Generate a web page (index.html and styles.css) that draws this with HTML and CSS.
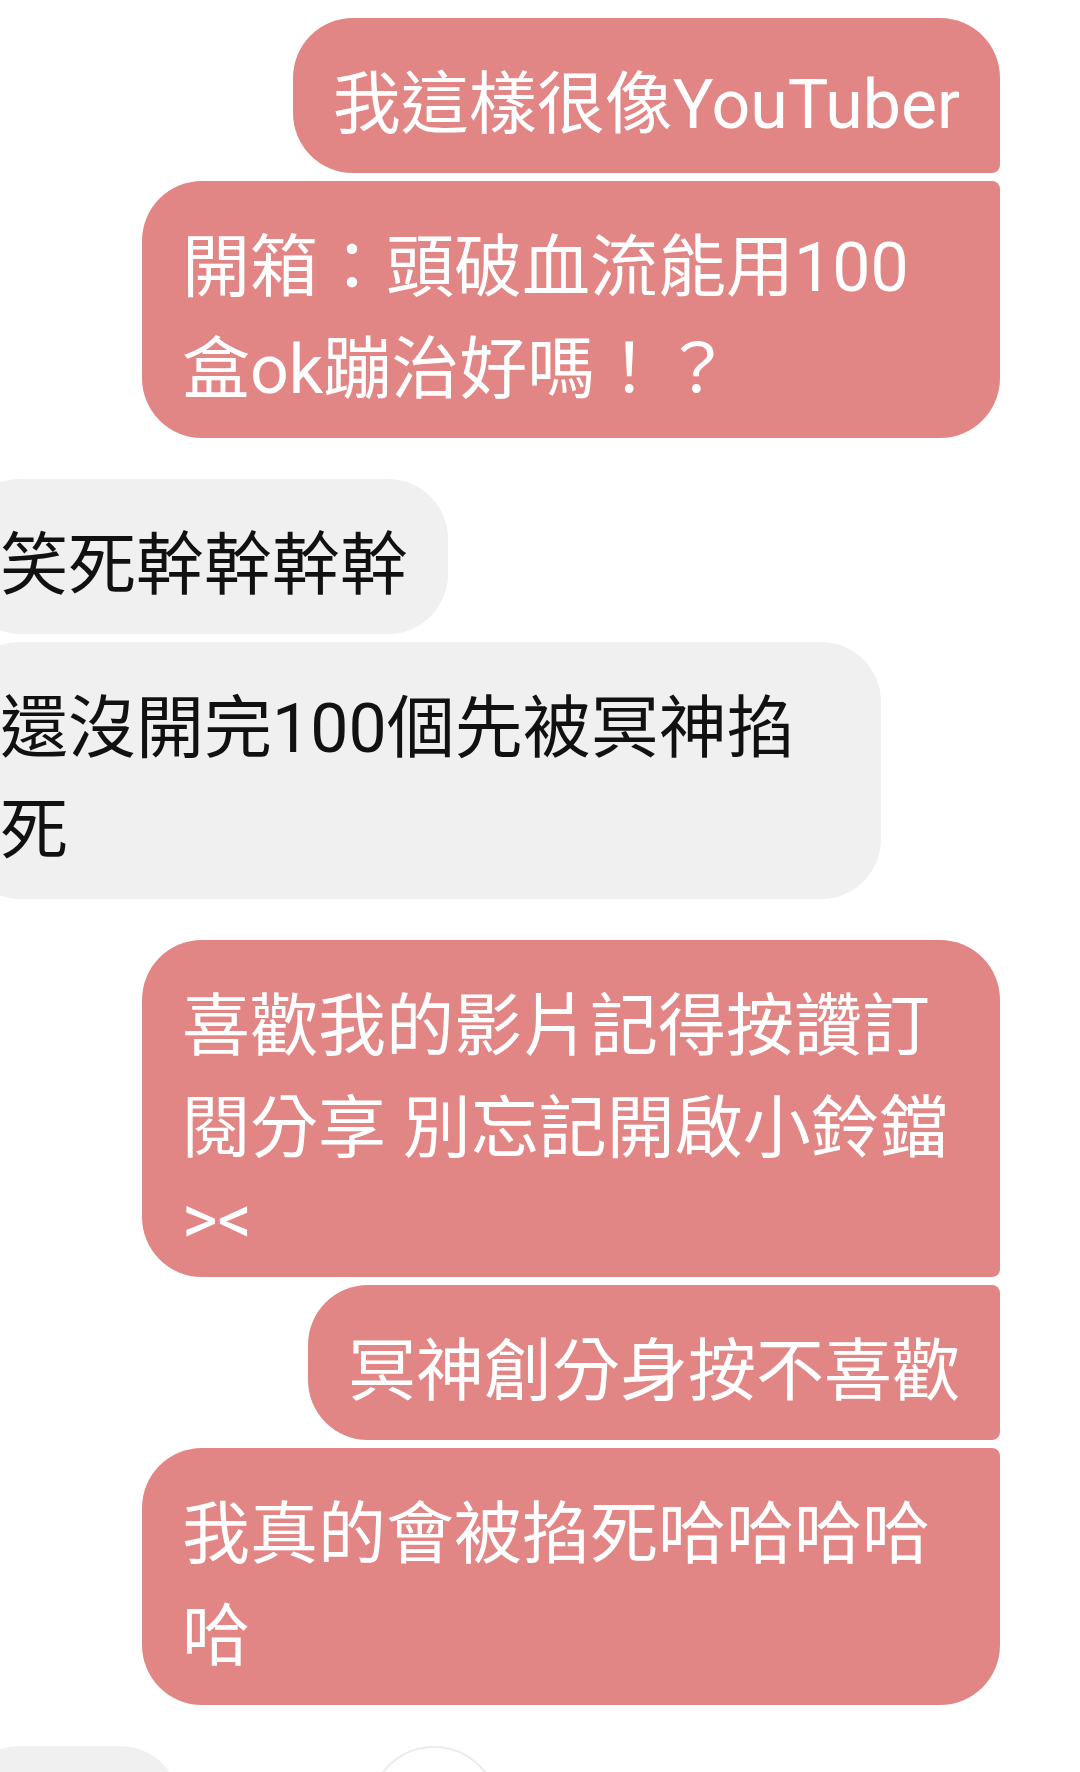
FILE: index.html
```html
<!DOCTYPE html>
<html>
	<head>
		<meta charset="utf-8">
		<link rel="stylesheet" href="styles.css">
	</head>
	<body>
		<div class="chat">
			<div class="group out">
				<div class="bubble first">我這樣很像YouTuber</div>
				<div class="bubble last">開箱：頭破血流能用100盒ok蹦治好嗎！？</div>
			</div>
			<div class="group in">
				<div class="bubble">笑死幹幹幹幹</div>
				<div class="bubble">還沒開完100個先被冥神掐死</div>
			</div>
			<div class="group out">
				<div class="bubble first">喜歡我的影片記得按讚訂閱分享 別忘記開啟小鈴鐺<span class="tail">&gt;&lt;</span></div>
				<div class="bubble mid">冥神創分身按不喜歡</div>
				<div class="bubble last">我真的會被掐死哈哈哈哈哈</div>
			</div>
			<div class="group in">
				<div class="row">
					<div class="bubble stub"></div>
					<div class="reply"></div>
				</div>
			</div>
		</div>
	</body>
</html>
```

FILE: styles.css
```css
*{
	margin: 0;
	padding: 0;
	box-sizing: border-box;
}
html,body{
	height: 100%;
	width: 100%;
}
body{
	background: #fff;
	overflow: hidden;
	font-family: Roboto, "Noto Sans CJK TC", sans-serif;
	font-size: 68px;
}
.chat{
	display: flex;
	flex-direction: column;
	gap: 41px;
	padding-top: 18px;
}
.group{
	display: flex;
	flex-direction: column;
	gap: 8px;
}
.group.out{
	align-items: flex-end;
	padding-right: 80px;
}
.group.in{
	align-items: flex-start;
	margin-left: -40px;
}
.bubble{
	padding: 36px 40px 17px;
	line-height: 102px;
	border-radius: 60px;
}
.out .bubble{
	background: #e28585;
	color: #fff;
	max-width: 858px;
}
.in .bubble{
	background: #f0f0f0;
	color: #111;
	max-width: 921px;
}
.out .bubble.first{
	border-bottom-right-radius: 8px;
}
.out .bubble.mid{
	border-top-right-radius: 8px;
	border-bottom-right-radius: 8px;
}
.out .bubble.last{
	border-top-right-radius: 8px;
}
.tail{
	display: block;
	line-height: 80px;
}
.row{
	display: flex;
	align-items: flex-start;
}
.bubble.stub{
	width: 220px;
	height: 155px;
}
.reply{
	width: 130px;
	height: 130px;
	margin-left: 189px;
	border: 2px solid #ececec;
	border-radius: 50%;
}
```
